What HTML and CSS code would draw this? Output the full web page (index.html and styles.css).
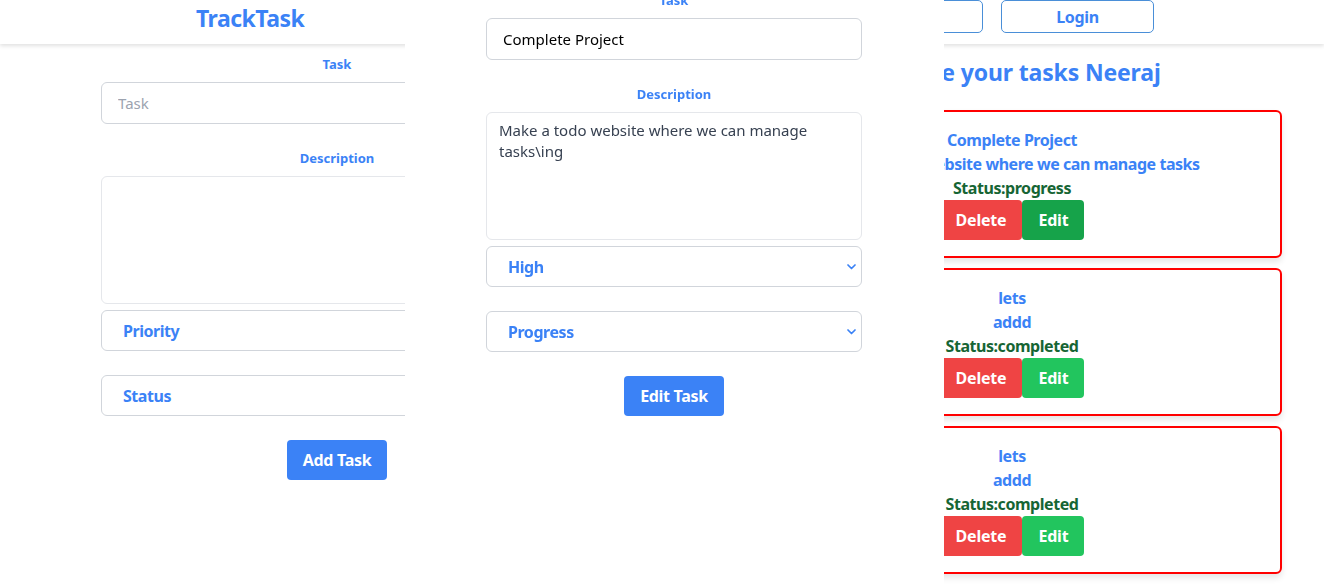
FILE: index.html
```html
<!DOCTYPE html>
<html lang="en">
<head>
<meta charset="utf-8">
<title>TrackTask</title>
<link rel="stylesheet" href="styles.css">
</head>
<body>
<header class="topbar">
  <div class="logo">TrackTask</div>
  <nav class="auth">
    <button class="auth-btn">Signup</button>
    <button class="auth-btn">Login</button>
  </nav>
</header>

<main class="layout">
  <section class="col-left">
    <form class="task-form">
      <label class="field-label">Task</label>
      <input class="text-input" type="text" placeholder="Task">
      <label class="field-label gap-top">Description</label>
      <textarea class="text-area"></textarea>
      <div class="select-wrap">
        <select class="select-input"><option>Priority</option></select>
        <svg class="chev" viewBox="0 0 9 6" width="9" height="6"><path d="M1 1l3.5 3.5L8 1" fill="none" stroke="#3b82f6" stroke-width="1.7" stroke-linecap="round" stroke-linejoin="round"/></svg>
      </div>
      <div class="select-wrap spaced">
        <select class="select-input"><option>Status</option></select>
        <svg class="chev" viewBox="0 0 9 6" width="9" height="6"><path d="M1 1l3.5 3.5L8 1" fill="none" stroke="#3b82f6" stroke-width="1.7" stroke-linecap="round" stroke-linejoin="round"/></svg>
      </div>
      <button type="button" class="primary-btn">Add Task</button>
    </form>
  </section>

  <section class="col-right">
    <h2 class="list-title">Manage your tasks Neeraj</h2>
    <div class="cards">
      <article class="card">
        <div class="card-title">Complete Project</div>
        <div class="card-desc">Make a todo website where we can manage tasks</div>
        <div class="card-status">Status:progress</div>
        <div class="card-actions">
          <button class="btn-del">Delete</button>
          <button class="btn-edit dark">Edit</button>
        </div>
      </article>
      <article class="card">
        <div class="card-title">lets</div>
        <div class="card-desc">addd</div>
        <div class="card-status">Status:completed</div>
        <div class="card-actions">
          <button class="btn-del">Delete</button>
          <button class="btn-edit">Edit</button>
        </div>
      </article>
      <article class="card">
        <div class="card-title">lets</div>
        <div class="card-desc">addd</div>
        <div class="card-status">Status:completed</div>
        <div class="card-actions">
          <button class="btn-del">Delete</button>
          <button class="btn-edit">Edit</button>
        </div>
      </article>
    </div>
  </section>
</main>

<div class="modal">
  <form class="task-form modal-form">
    <label class="field-label">Task</label>
    <input class="text-input filled" type="text" value="Complete Project">
    <label class="field-label gap-top">Description</label>
    <textarea class="text-area filled">Make a todo website where we can manage tasks\ing</textarea>
    <div class="select-wrap">
      <select class="select-input"><option>High</option></select>
      <svg class="chev" viewBox="0 0 9 6" width="9" height="6"><path d="M1 1l3.5 3.5L8 1" fill="none" stroke="#3b82f6" stroke-width="1.7" stroke-linecap="round" stroke-linejoin="round"/></svg>
    </div>
    <div class="select-wrap spaced">
      <select class="select-input"><option>Progress</option></select>
      <svg class="chev" viewBox="0 0 9 6" width="9" height="6"><path d="M1 1l3.5 3.5L8 1" fill="none" stroke="#3b82f6" stroke-width="1.7" stroke-linecap="round" stroke-linejoin="round"/></svg>
    </div>
    <button type="button" class="primary-btn">Edit Task</button>
  </form>
</div>
</body>
</html>
```

FILE: styles.css
```css
* { box-sizing: border-box; }

html, body {
  margin: 0;
  padding: 0;
  height: 100%;
  overflow: hidden;
  background: #fff;
  font-family: "Noto Sans", "Open Sans", sans-serif;
}

button, input, textarea, select {
  font-family: inherit;
}

.topbar {
  height: 44px;
  display: flex;
  justify-content: space-between;
  align-items: flex-start;
  padding: 0 170px 0 196px;
  box-shadow: 0 2px 4px rgba(0, 0, 0, 0.12);
  position: relative;
}

.logo {
  font-size: 23px;
  font-weight: 700;
  line-height: 36px;
  letter-spacing: -0.5px;
  color: #3b82f6;
}

.auth {
  display: flex;
  gap: 18px;
}

.auth-btn {
  width: 153px;
  height: 33px;
  background: #fff;
  border: 1px solid #4a8fd8;
  border-radius: 5px;
  color: #3b82f6;
  font-size: 16px;
  font-weight: 700;
  letter-spacing: -0.3px;
}

.layout {
  display: flex;
}

.col-left {
  width: 674px;
  display: flex;
  justify-content: center;
}

.task-form {
  width: 472px;
  display: flex;
  flex-direction: column;
  align-items: center;
  margin-top: 12px;
}

.field-label {
  display: block;
  font-size: 13px;
  line-height: 16px;
  font-weight: 700;
  color: #3b82f6;
  margin-bottom: 10px;
}

.gap-top { margin-top: 26px; }

.text-input {
  width: 100%;
  height: 42px;
  border: 1px solid #d1d5db;
  border-radius: 6px;
  padding: 0 16px;
  font-size: 15px;
  color: #000;
  outline: none;
}

.text-input::placeholder { color: #9ca3af; }

.text-area {
  width: 100%;
  height: 128px;
  border: 1px solid #e5e7eb;
  border-radius: 6px;
  padding: 7px 12px;
  font-size: 15px;
  line-height: 21px;
  color: #374151;
  resize: none;
  outline: none;
}

.select-wrap {
  position: relative;
  width: 100%;
  margin-top: 6px;
}

.select-wrap.spaced { margin-top: 24px; }

.select-input {
  width: 100%;
  height: 41px;
  appearance: none;
  -webkit-appearance: none;
  background: #fff;
  border: 1px solid #d1d5db;
  border-radius: 6px;
  padding: 0 21px;
  font-size: 16px;
  font-weight: 700;
  letter-spacing: -0.45px;
  color: #3b82f6;
  outline: none;
}

.chev {
  position: absolute;
  right: 6px;
  top: 18px;
}

.primary-btn {
  margin-top: 24px;
  height: 40px;
  padding: 0 16px;
  background: #3b82f6;
  color: #fff;
  border: none;
  border-radius: 4px;
  font-size: 16px;
  font-weight: 700;
  letter-spacing: -0.3px;
}

.col-right {
  flex: 1;
  padding-left: 26px;
  display: flex;
  flex-direction: column;
  align-items: center;
}

.list-title {
  margin: 12px 0 22px;
  font-size: 23px;
  line-height: 32px;
  font-weight: 700;
  letter-spacing: -0.15px;
  color: #3b82f6;
}

.cards {
  display: flex;
  flex-direction: column;
  gap: 10px;
}

.card {
  width: 540px;
  height: 148px;
  border: 2px solid #ff0000;
  border-radius: 6px;
  padding: 16px;
  display: flex;
  flex-direction: column;
  align-items: center;
  box-shadow: 0 4px 6px rgba(0, 0, 0, 0.1);
  background: #fff;
}

.card-title, .card-desc, .card-status {
  font-size: 16px;
  line-height: 24px;
  font-weight: 700;
  letter-spacing: -0.45px;
}

.card-title, .card-desc { color: #3b82f6; }
.card-status { color: #166534; }

.card-actions { display: flex; }

.btn-del, .btn-edit {
  height: 40px;
  padding: 0 16px;
  border: none;
  border-radius: 4px;
  color: #fff;
  font-size: 16px;
  font-weight: 700;
  letter-spacing: -0.2px;
}

.btn-del { background: #ef4444; }
.btn-edit { background: #22c55e; }
.btn-edit.dark { background: #16a34a; }

.modal {
  position: fixed;
  top: 0;
  left: 405px;
  width: 539px;
  bottom: 0;
  padding-right: 1px;
  background: #fff;
  display: flex;
  justify-content: center;
  z-index: 10;
}

.modal-form {
  width: 376px;
  margin-top: -8px;
}
```
